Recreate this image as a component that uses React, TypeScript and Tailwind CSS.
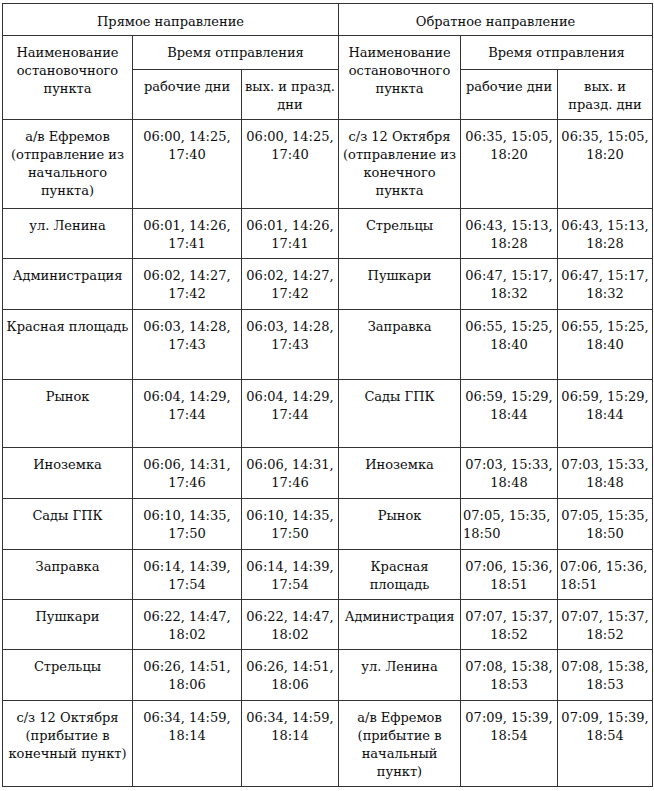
import React from 'react';

type Row = {
  name: string[];
  work: string[];
  holiday: string[];
  h: string;
  workLeft?: boolean;
  holidayLeft?: boolean;
};

const forward: Row[] = [
  { name: ['а/в Ефремов', '(отправление из', 'начального', 'пункта)'], work: ['06:00, 14:25,', '17:40'], holiday: ['06:00, 14:25,', '17:40'], h: 'h-[89px]' },
  { name: ['ул. Ленина'], work: ['06:01, 14:26,', '17:41'], holiday: ['06:01, 14:26,', '17:41'], h: 'h-[50px]' },
  { name: ['Администрация'], work: ['06:02, 14:27,', '17:42'], holiday: ['06:02, 14:27,', '17:42'], h: 'h-[51px]' },
  { name: ['Красная площадь'], work: ['06:03, 14:28,', '17:43'], holiday: ['06:03, 14:28,', '17:43'], h: 'h-[70px]' },
  { name: ['Рынок'], work: ['06:04, 14:29,', '17:44'], holiday: ['06:04, 14:29,', '17:44'], h: 'h-[68px]' },
  { name: ['Иноземка'], work: ['06:06, 14:31,', '17:46'], holiday: ['06:06, 14:31,', '17:46'], h: 'h-[51px]' },
  { name: ['Сады ГПК'], work: ['06:10, 14:35,', '17:50'], holiday: ['06:10, 14:35,', '17:50'], h: 'h-[51px]' },
  { name: ['Заправка'], work: ['06:14, 14:39,', '17:54'], holiday: ['06:14, 14:39,', '17:54'], h: 'h-[50px]' },
  { name: ['Пушкари'], work: ['06:22, 14:47,', '18:02'], holiday: ['06:22, 14:47,', '18:02'], h: 'h-[50px]' },
  { name: ['Стрельцы'], work: ['06:26, 14:51,', '18:06'], holiday: ['06:26, 14:51,', '18:06'], h: 'h-[51px]' },
  { name: ['с/з 12 Октября', '(прибытие в', 'конечный пункт)'], work: ['06:34, 14:59,', '18:14'], holiday: ['06:34, 14:59,', '18:14'], h: 'h-[86px]' },
];

const backward: Row[] = [
  { name: ['с/з 12 Октября', '(отправление из', 'конечного', 'пункта'], work: ['06:35, 15:05,', '18:20'], holiday: ['06:35, 15:05,', '18:20'], h: '' },
  { name: ['Стрельцы'], work: ['06:43, 15:13,', '18:28'], holiday: ['06:43, 15:13,', '18:28'], h: '' },
  { name: ['Пушкари'], work: ['06:47, 15:17,', '18:32'], holiday: ['06:47, 15:17,', '18:32'], h: '' },
  { name: ['Заправка'], work: ['06:55, 15:25,', '18:40'], holiday: ['06:55, 15:25,', '18:40'], h: '' },
  { name: ['Сады ГПК'], work: ['06:59, 15:29,', '18:44'], holiday: ['06:59, 15:29,', '18:44'], h: '' },
  { name: ['Иноземка'], work: ['07:03, 15:33,', '18:48'], holiday: ['07:03, 15:33,', '18:48'], h: '' },
  { name: ['Рынок'], work: ['07:05, 15:35,', '18:50'], holiday: ['07:05, 15:35,', '18:50'], h: '', workLeft: true },
  { name: ['Красная', 'площадь'], work: ['07:06, 15:36,', '18:51'], holiday: ['07:06, 15:36,', '18:51'], h: '', holidayLeft: true },
  { name: ['Администрация'], work: ['07:07, 15:37,', '18:52'], holiday: ['07:07, 15:37,', '18:52'], h: '' },
  { name: ['ул. Ленина'], work: ['07:08, 15:38,', '18:53'], holiday: ['07:08, 15:38,', '18:53'], h: '' },
  { name: ['а/в Ефремов', '(прибытие в', 'начальный', 'пункт)'], work: ['07:09, 15:39,', '18:54'], holiday: ['07:09, 15:39,', '18:54'], h: '' },
];

const cell = 'border border-[#333] align-top px-[2px] pt-[8px] text-center whitespace-nowrap';

function Lines({ lines }: { lines: string[] }) {
  return (
    <>
      {lines.map((l, i) => (
        <div key={i}>{l}</div>
      ))}
    </>
  );
}

export default function App() {
  return (
    <div
      className="bg-white w-[654px] h-[791px] pl-[2px] pt-[3px] text-[#0d0d0d] text-[13px] leading-[18px]"
      style={{ fontFamily: '"DejaVu Serif", "Liberation Serif", serif' }}
    >
      <table className="table-fixed border-collapse w-[650px]">
        <colgroup>
          <col className="w-[130px]" />
          <col className="w-[109px]" />
          <col className="w-[97px]" />
          <col className="w-[122px]" />
          <col className="w-[97px]" />
          <col className="w-[95px]" />
        </colgroup>
        <thead>
          <tr className="h-[32px]">
            <th colSpan={3} className={`${cell} font-normal !pt-[9px]`}>Прямое направление</th>
            <th colSpan={3} className={`${cell} font-normal !pt-[9px]`}>Обратное направление</th>
          </tr>
          <tr className="h-[34px]">
            <th rowSpan={2} className={`${cell} font-normal`}>
              <Lines lines={['Наименование', 'остановочного', 'пункта']} />
            </th>
            <th colSpan={2} className={`${cell} font-normal`}>Время отправления</th>
            <th rowSpan={2} className={`${cell} font-normal`}>
              <Lines lines={['Наименование', 'остановочного', 'пункта']} />
            </th>
            <th colSpan={2} className={`${cell} font-normal`}>Время отправления</th>
          </tr>
          <tr className="h-[50px]">
            <th className={`${cell} font-normal`}>рабочие дни</th>
            <th className={`${cell} font-normal`}>
              <Lines lines={['вых. и празд.', 'дни']} />
            </th>
            <th className={`${cell} font-normal`}>рабочие дни</th>
            <th className={`${cell} font-normal`}>
              <Lines lines={['вых. и', 'празд. дни']} />
            </th>
          </tr>
        </thead>
        <tbody>
          {forward.map((f, i) => {
            const b = backward[i];
            return (
              <tr key={i} className={f.h}>
                <td className={cell}><Lines lines={f.name} /></td>
                <td className={cell}><Lines lines={f.work} /></td>
                <td className={cell}><Lines lines={f.holiday} /></td>
                <td className={cell}><Lines lines={b.name} /></td>
                <td className={`${cell} ${b.workLeft ? '!text-left' : ''}`}><Lines lines={b.work} /></td>
                <td className={`${cell} ${b.holidayLeft ? '!text-left' : ''}`}><Lines lines={b.holiday} /></td>
              </tr>
            );
          })}
        </tbody>
      </table>
    </div>
  );
}
